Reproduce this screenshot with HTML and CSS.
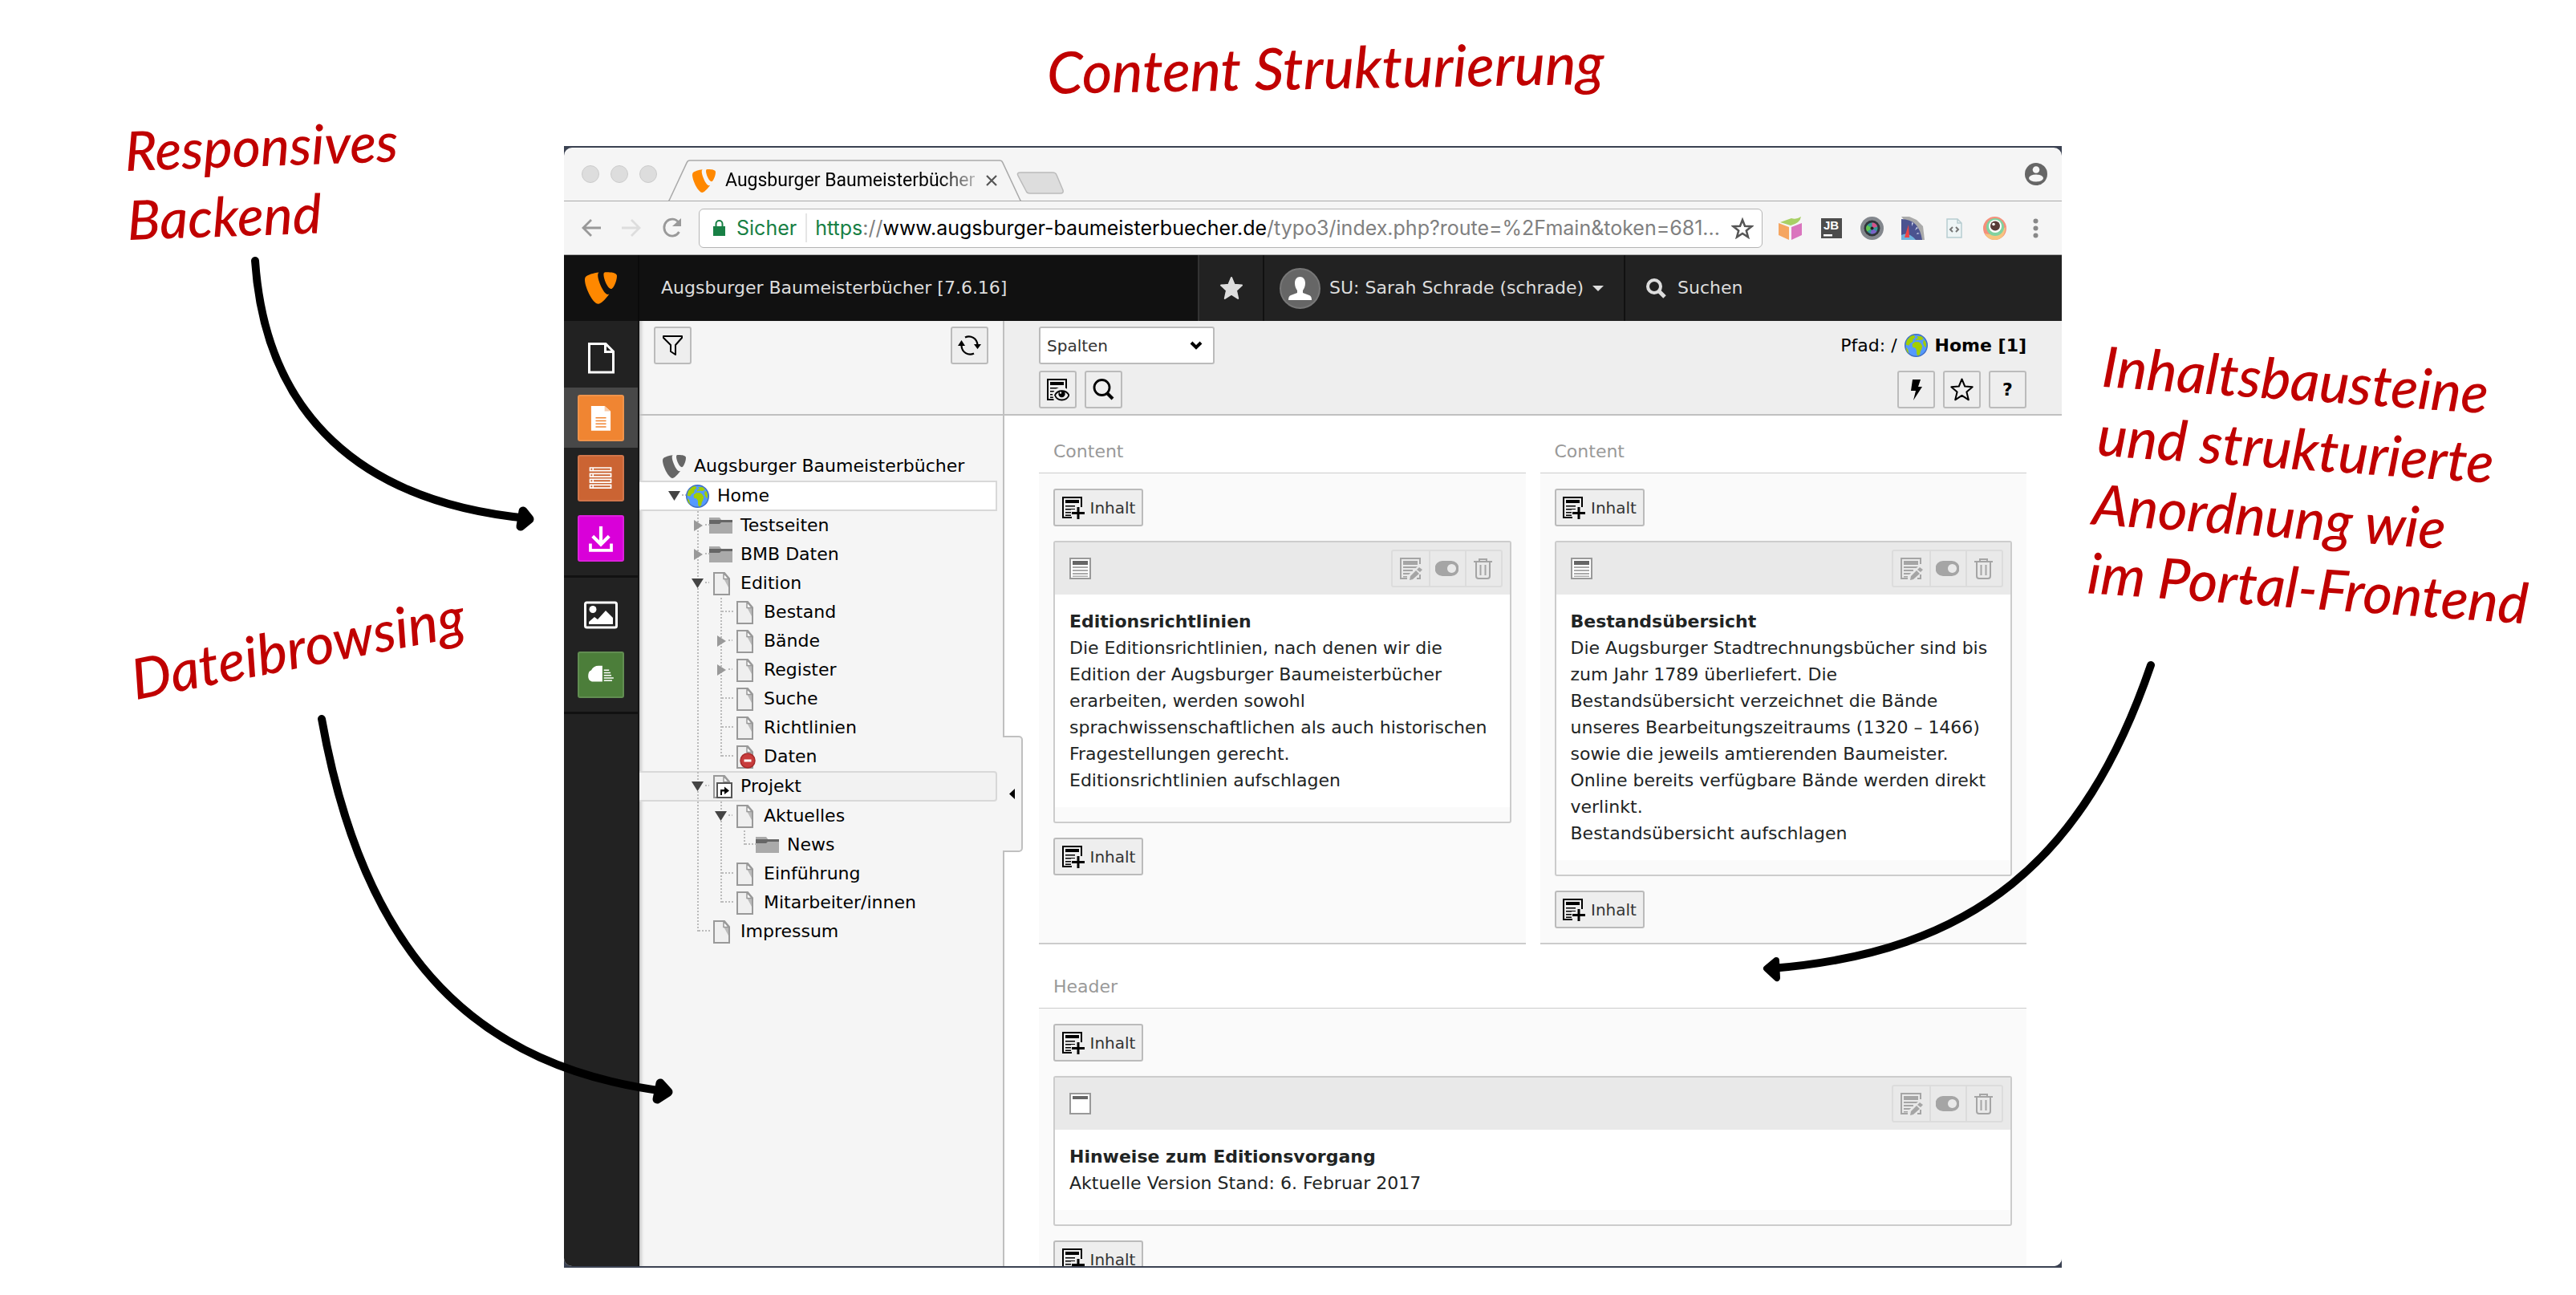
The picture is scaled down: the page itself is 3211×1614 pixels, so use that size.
FILE: index.html
```html
<!DOCTYPE html>
<html lang="de">
<head>
<meta charset="utf-8">
<meta name="viewport" content="width=device-width, initial-scale=1">
<title>Content Strukturierung</title>
<link rel="stylesheet" href="styles.css">
</head>
<body>
<svg class="sprite" aria-hidden="true">
  <symbol id="typo3" viewBox="1.9 2 12.1 12"><path fill="currentColor" d="M11.1 10.3c-.2 0-.3.1-.5.1C9 10.4 6.8 5 6.8 3.2c0-.7.2-.9.4-1.1-2 .2-4.3.9-5.1 1.8-.1.2-.2.6-.2 1C1.9 7.7 4.9 14 7 14c.9 0 2.6-1.6 4.1-3.7M10.2 2c1.9 0 3.8.3 3.8 1.4 0 2.2-1.4 4.9-2.1 4.9-1.3 0-2.9-3.6-2.9-5.4 0-.8.3-.9 1.2-.9"/></symbol>
  <symbol id="globe" viewBox="0 0 16 16"><circle cx="8" cy="8" r="7.6" fill="#59f" stroke="#3f6fc4" stroke-width=".8"/><path fill="#a2ce00" d="M4.2 1.6 1.6 4.4l-.7 3.1L3 8.2l.9-1.7 1.7-.8.3-2.1L7.5 2.4 6.3 1zM1 9.2l1.3 1.6.6 2.8C1.6 12.500 1 11 1 9.200M8.300 1.600l3.400.2 1.500 1.700-1.800.9-2.600-.2-1.300.6.300-1.200 1.600-.700zM5.300 7.100l2-1.600 2.500.1 1.300.9 1.200 2.100-.6 2.200-.8 1.400-.3 2-1.300 1-.9-1.200-.2-2.900-.9-1.400-1.800-.5zM13 4.500l1.200.2.700 2.500-.2 2.500-1.100-1.300-.9-2z"/></symbol>
  <symbol id="page" viewBox="0 0 29 29"><path fill="#efefef" stroke="#999" stroke-width="2" d="M6 1h13l6 7v20H6z"/><path fill="#bbb" d="M18 8h6v11z"/><path fill="#fff" stroke="#999" stroke-width="1.500" d="M18 1.500V8.500h6.500z"/></symbol>
  <symbol id="folder" viewBox="0 0 29 29"><path fill="#aaa" d="M0 4h13l3 4h13v16H0z"/><path fill="#666" d="M0 7h29v3H15l-2 2H0z"/></symbol>
  <symbol id="stop" viewBox="0 0 20 20"><circle cx="10" cy="10" r="9" fill="#c83c3c" stroke="#a52a2a" stroke-width="1.500"/><path fill="#fff" d="M5.500 8.500h9v3h-9z"/></symbol>
  <symbol id="shortcut" viewBox="0 0 20 20"><path fill="#fff" stroke="#555" stroke-width="2" d="M1 1h18v18H1z"/><path fill="#000" d="M5 16V9h5V5.500l6 5-6 4.500v-3.500H7V16z"/></symbol>
  <symbol id="filter" viewBox="0 0 29 29"><path fill="none" stroke="#000" stroke-width="2" stroke-linejoin="round" d="M3 3h23v2l-8 9v12l-6-4v-8L3 5z"/></symbol>
  <symbol id="refresh" viewBox="0 0 29 29"><g fill="none" stroke="#000" stroke-width="2.200"><path d="M9 4.500C16 1 24 6 24.500 14"/><path d="M20 24.500C13 28 5 23 4.500 15"/></g><path d="M20 13h9l-4.500 6zM0 15h9l-4.500-7z"/></symbol>
  <symbol id="doc" viewBox="0 0 29 29"><path fill="none" stroke="currentColor" stroke-width="2" d="M25 14V2H2v25h11"/><path fill="currentColor" d="M5 5h17v4H5zM5 12h17v1.500H5zM5 16h14v1.500H5zM5 20h9v1.500H5zM5 23.500h7V25H5z"/></symbol>
  <symbol id="doc-add" viewBox="0 0 29 29"><use href="#doc"/><path fill="#eee" d="M17 12h8v5h4v8h-4v4h-8v-4h-5v-8h5z"/><path fill="none" stroke="currentColor" stroke-width="2" d="M25 14V8"/><path fill="currentColor" d="M19.500 14h3v6H29v3h-6.500v6h-3v-6H13v-3h6.500z"/></symbol>
  <symbol id="doc-view" viewBox="0 0 29 29"><use href="#doc"/><path fill="#eee" d="M8 21c3-12 18-12 21-3v11H10z"/><path fill="none" stroke="#000" stroke-width="1.800" d="M11 21.500c3-7 14-7 17.500 0-3.500 8-14.500 8-17.500 0z"/><circle cx="19.500" cy="20" r="4.200"/><circle cx="18" cy="18.500" r="1.200" fill="#eee"/></symbol>
  <symbol id="doc-edit" viewBox="0 0 29 29"><path fill="none" stroke="currentColor" stroke-width="2" d="M26 9V2H2v25h8M26 22v5h-4"/><path fill="currentColor" d="M5 5h18v5H5zM5 12h18v2H5zM5 16h12v2H5zM5 20h9v2H5zM5 24h5v1.500H5z"/><path fill="#e9e9e9" d="M24 11l5 4v4L17 29h-7l1-6z"/><path fill="currentColor" d="M25 13l4 3-3 3-4-3zM21 17l4 4-8 7-4 1 1-5z"/></symbol>
  <symbol id="toggle" viewBox="0 0 29 29"><path fill="currentColor" fill-rule="evenodd" d="M9 5h11a9.500 9.500 0 0 1 0 19H9A9.500 9.500 0 0 1 9 5m11.500 4a5.500 5.500 0 1 0 .010 0z"/></symbol>
  <symbol id="trash" viewBox="0 0 29 29"><g fill="none" stroke="currentColor" stroke-width="2"><path d="M3 6h23M10 6V3h9v3M6 6v18q0 3 3 3h11q3 0 3-3V6"/><path d="M11.500 10v13M17.500 10v13"/></g></symbol>
  <symbol id="ce-text" viewBox="0 0 27 27"><path fill="#fff" stroke="#999" stroke-width="2" d="M1 1h25v25H1z"/><path fill="#666" d="M4 4h19v5H4z"/><path fill="#aaa" d="M4 11h19v2H4zM4 15h19v2H4zM4 19h19v2H4zM4 22.500h19v1.500H4z"/></symbol>
  <symbol id="ce-header" viewBox="0 0 27 27"><path fill="#fff" stroke="#999" stroke-width="2" d="M1 1h25v25H1z"/><path fill="#666" d="M4 4h19v4H4z"/></symbol>
</svg>

<div class="stage">
  <h1 class="headline note">Content Strukturierung</h1>

  <aside class="notes-left">
    <p class="note note-responsive">Responsives<br>Backend</p>
    <p class="note note-files">Dateibrowsing</p>
  </aside>

  <div class="browser">
   <div class="browser-inner">
    <div class="tabstrip">
      <div class="lights"><span></span><span></span><span></span></div>
      <div class="tab">
        <svg class="tab-shape" viewBox="0 0 440 53" preserveAspectRatio="none" aria-hidden="true"><path d="M0 52H1L23 4Q24 1 27 1H413Q416 1 417 4L439 52H440" fill="#f5f5f5" stroke="#aaa" stroke-width="1.500"/></svg>
        <svg class="favicon"><use href="#typo3"/></svg>
        <span class="tab-title">Augsburger Baumeisterbücher</span>
        <button class="bare tab-close" aria-label="Tab schließen"><svg viewBox="0 0 14 14"><path d="M1 1l12 12M13 1 1 13" stroke="#555" stroke-width="2.200"/></svg></button>
      </div>
      <button class="bare new-tab" aria-label="Neuer Tab"><svg viewBox="0 0 60 28"><path d="M5 1h40q4 0 5 3l8 19q1 4-3 4H17q-4 0-5-3L2 5q-2-4 3-4z" fill="#ddd" stroke="#bbb" stroke-width="1.500"/></svg></button>
      <button class="bare profile" aria-label="Profil"><svg viewBox="0 0 28 28"><circle cx="14" cy="14" r="14" fill="#666"/><circle cx="14" cy="8.500" r="4.300" fill="#f5f5f5"/><ellipse cx="14" cy="19" rx="9" ry="4.500" fill="#f5f5f5"/></svg></button>
    </div>

    <div class="navbar">
      <button class="bare nav-btn" aria-label="Zurück"><svg viewBox="0 0 26 26"><path d="M25 13H3M13 3 3 13l10 10" fill="none" stroke="#999" stroke-width="2.800"/></svg></button>
      <button class="bare nav-btn" aria-label="Vor"><svg viewBox="0 0 26 26"><path d="M1 13h22M13 3l10 10-10 10" fill="none" stroke="#ddd" stroke-width="2.800"/></svg></button>
      <button class="bare nav-btn" aria-label="Neu laden"><svg viewBox="0 0 26 26"><path d="M22 6.500A10 10.500 0 1 0 22.500 18" fill="none" stroke="#999" stroke-width="2.800"/><path d="M25 1v10H14z" fill="#999"/></svg></button>
      <div class="address">
        <svg class="lock" viewBox="0 0 15 20"><path fill="none" stroke="#188045" stroke-width="2" d="M3.500 8V5a4 4 0 0 1 8 0v3"/><path fill="#188045" d="M0 8h15v12H0z"/></svg>
        <span class="secure">Sicher</span>
        <span class="url"><span class="scheme">https</span>://<b>www.augsburger-baumeisterbuecher.de</b>/typo3/index.php?route=%2Fmain&amp;token=681...</span>
        <button class="bare bookmark" aria-label="Lesezeichen"><svg viewBox="0 0 28 27"><path d="M14 3l3 7.800 8.300.4-6.500 5.200 2.200 8.100-7-4.600-7 4.600 2.200-8.100L2.700 11.200l8.300-.4z" fill="none" stroke="#555" stroke-width="2.500"/></svg></button>
      </div>
      <div class="extensions">
        <svg viewBox="0 0 29 29"><path fill="#f5a662" d="M0 8l13 5v16L0 23z"/><path fill="#da75be" d="M29 8l-13 5v16l13-6z"/><path fill="#a8d065" d="M2 7l14-5q6 2 12-2-1 8-13 11z"/></svg>
        <svg viewBox="0 0 29 29"><path fill="#4c4c4c" d="M2 2h26v25H2z"/><text x="5" y="16" class="jb">JB</text><path fill="#fff" d="M5 22h11v2.500H5z"/></svg>
        <svg viewBox="0 0 29 29"><circle cx="14.500" cy="14.500" r="14.500" fill="#83878d"/><circle cx="14.500" cy="14.500" r="10" fill="#30343a"/><circle cx="14.500" cy="14.500" r="7" fill="#399"/><path fill="#d5528a" d="M14.500 14.500v-7a7 7 0 0 1 6.500 5z"/><path fill="#7a63c8" d="M14.500 14.500l6 4a7 7 0 0 1-8 2.500z"/><path fill="#60c44e" d="M14.500 14.500l-6 4a7 7 0 0 1 0-8z"/><circle cx="14.500" cy="14.500" r="2" fill="#222"/></svg>
        <svg viewBox="0 0 29 29"><path fill="#aaa" d="M0 0h10l9 4 8 8 2 17h-4z"/><path fill="#4b5390" d="M0 3q22 0 26 26H0z"/><path fill="#cdd3ea" d="M13 7l2 1-2 4zM19 13l2 1-4 3zM20 20l3 1-4 1z"/><path fill="#6fb2dd" d="M0 23q9-5 18 6H0z"/><path fill="#e44" d="M4 26 9 10l1 16z"/></svg>
        <svg viewBox="0 0 29 29"><path fill="#eef5f6" stroke="#b7cdd1" stroke-width="1.500" d="M6 3h13l5 5v18H6zM19 3v5h5"/><path fill="none" stroke="#777" stroke-width="2" d="M13 13l-3 3 3 3M17 13l3 3-3 3"/></svg>
        <svg viewBox="0 0 29 29"><circle cx="14.500" cy="14.500" r="14.500" fill="#f5907b"/><path fill="#f6c47f" d="M2 21q13 4 26-8-1 16-14 16-8 0-12-8"/><circle cx="15" cy="13" r="11" fill="#80d2a0"/><circle cx="15" cy="12" r="8" fill="#fff"/><circle cx="15" cy="11.500" r="6" fill="#583b38"/><circle cx="13" cy="9.500" r="1.800" fill="#fff"/></svg>
        <button class="bare" aria-label="Menü"><svg viewBox="0 0 29 29"><g fill="#888"><circle cx="14.500" cy="5.500" r="3"/><circle cx="14.500" cy="14.500" r="3"/><circle cx="14.500" cy="23.500" r="3"/></g></svg></button>
      </div>
    </div>

    <header class="topbar">
      <a class="brand" href="#" aria-label="TYPO3"><svg><use href="#typo3"/></svg></a>
      <span class="sitename">Augsburger Baumeisterbücher [7.6.16]</span>
      <button class="bare top-item fav" aria-label="Lesezeichen"><svg viewBox="0 0 30 30"><path fill="#ddd" stroke="#ddd" stroke-width="2" stroke-linejoin="round" d="M15 2l3.700 8.800 9.300.8-7 6.300 2.200 10L15 22.600 6.800 27.900l2.200-10-7-6.300 9.300-.8z"/></svg></button>
      <button class="bare top-item user">
        <svg class="avatar" viewBox="0 0 51 51"><circle cx="25.500" cy="25.500" r="24.500" fill="#666" stroke="#777" stroke-width="2"/><path fill="#fff" d="M25.500 11c4 0 6.500 3 6.500 8 0 4-1.500 7-3 9v3l8 3q3 1 3 6H11q0-5 3-6l8-3v-3c-1.500-2-3-5-3-9 0-5 2.500-8 6.500-8"/></svg>
        <span>SU: Sarah Schrade (schrade)</span>
        <svg class="caret" viewBox="0 0 14 7"><path fill="#ddd" d="M0 0h14L7 7z"/></svg>
      </button>
      <label class="top-item search">
        <svg viewBox="0 0 25 25"><circle cx="10" cy="10" r="8" fill="none" stroke="#ddd" stroke-width="4"/><path d="M16 16l7 7" stroke="#ddd" stroke-width="5"/></svg>
        <input type="search" placeholder="Suchen" aria-label="Suchen">
      </label>
    </header>

    <div class="workspace">
      <nav class="modules" aria-label="Module">
        <ul>
          <li><a href="#" aria-label="Web"><svg class="mod-plain" viewBox="0 0 44 44"><g fill="none" stroke="#fff" stroke-width="3"><path d="M7.500 4.500H28L37.500 14v26h-30z"/><path d="M27.500 5v9.500H37"/></g></svg></a></li>
          <li class="active"><a class="tile tile-page" href="#" aria-label="Seite"><svg viewBox="0 0 58 58"><path fill="#fff" d="M16 13h18l8 7v26H16z"/><path fill="#f9c9a4" d="M34 13v7h8z"/><path fill="#f08532" d="M22 28h14v1.500H22zM22 32h14v1.500H22zM22 36h14v1.500H22zM22 40h14v1.500H22z"/></svg></a></li>
          <li><a class="tile tile-list" href="#" aria-label="Liste"><svg viewBox="0 0 58 58"><g fill="none" stroke="#fff" stroke-width="1.800"><path d="M14.500 15h28v4h-28zM14.500 23h28v4h-28zM14.500 30.500h28v4h-28zM14.500 38h28v4h-28zM18.500 15v4M18.500 23v4M18.500 30.500v4M18.500 38v4"/></g></svg></a></li>
          <li><a class="tile tile-import" href="#" aria-label="Import"><svg viewBox="0 0 58 58"><path fill="none" stroke="#fff" stroke-width="4.500" d="M29 13v22M18 26l11 11 11-11"/><path fill="none" stroke="#fff" stroke-width="4" d="M15 36v9h28v-9"/></svg></a></li>
        </ul>
        <ul>
          <li><a href="#" aria-label="Datei"><svg class="mod-plain" viewBox="0 0 44 44"><rect x="2.500" y="7" width="39" height="31" rx="2" fill="none" stroke="#fff" stroke-width="3"/><circle cx="12" cy="15.500" r="4.500" fill="#fff"/><path fill="#fff" d="M7 34v-3l7-6 4 3 10-11 9 9v8z"/></svg></a></li>
          <li><a class="tile tile-files" href="#" aria-label="Dateiliste"><svg viewBox="0 0 58 58"><path fill="#fff" d="M31 17v21H17q-5-1-5-7 0-7 4-8 3-6 10-6zM33 22h7v1.500h-7zM33 25.500h9V27h-9zM33 29h10v1.500H33zM33 32.500h13V34H33zM33 36h11v1.500H33z"/></svg></a></li>
        </ul>
      </nav>

      <section class="pagetree" aria-label="Seitenbaum">
        <div class="docheader tree-tools">
          <button class="btn square" aria-label="Filter"><svg><use href="#filter"/></svg></button>
          <button class="btn square" aria-label="Aktualisieren"><svg><use href="#refresh"/></svg></button>
        </div>
        <ul class="tree">
          <li class="root"><svg><use href="#typo3"/></svg><a href="#">Augsburger Baumeisterbücher</a></li>
          <li class="current"><i class="g open first"></i><svg><use href="#globe"/></svg><a href="#">Home</a></li>
          <li><i class="g"></i><i class="g line closed"></i><svg><use href="#folder"/></svg><a href="#">Testseiten</a></li>
          <li><i class="g"></i><i class="g line closed"></i><svg><use href="#folder"/></svg><a href="#">BMB Daten</a></li>
          <li><i class="g"></i><i class="g line open"></i><svg><use href="#page"/></svg><a href="#">Edition</a></li>
          <li><i class="g"></i><i class="g line"></i><i class="g line stub"></i><svg><use href="#page"/></svg><a href="#">Bestand</a></li>
          <li><i class="g"></i><i class="g line"></i><i class="g line closed"></i><svg><use href="#page"/></svg><a href="#">Bände</a></li>
          <li><i class="g"></i><i class="g line"></i><i class="g line closed"></i><svg><use href="#page"/></svg><a href="#">Register</a></li>
          <li><i class="g"></i><i class="g line"></i><i class="g line stub"></i><svg><use href="#page"/></svg><a href="#">Suche</a></li>
          <li><i class="g"></i><i class="g line"></i><i class="g line stub"></i><svg><use href="#page"/></svg><a href="#">Richtlinien</a></li>
          <li><i class="g"></i><i class="g line"></i><i class="g half stub"></i><svg viewBox="0 0 29 29"><use href="#page"/><use href="#stop" x="9" y="9" width="20" height="20"/></svg><a href="#">Daten</a></li>
          <li class="marked"><i class="g"></i><i class="g line open"></i><svg viewBox="0 0 29 29"><use href="#page"/><use href="#shortcut" x="9" y="9" width="20" height="20"/></svg><a href="#">Projekt</a></li>
          <li><i class="g"></i><i class="g line"></i><i class="g line open"></i><svg><use href="#page"/></svg><a href="#">Aktuelles</a></li>
          <li><i class="g"></i><i class="g line"></i><i class="g line"></i><i class="g half stub"></i><svg><use href="#folder"/></svg><a href="#">News</a></li>
          <li><i class="g"></i><i class="g line"></i><i class="g line stub"></i><svg><use href="#page"/></svg><a href="#">Einführung</a></li>
          <li><i class="g"></i><i class="g line"></i><i class="g half stub"></i><svg><use href="#page"/></svg><a href="#">Mitarbeiter/innen</a></li>
          <li><i class="g"></i><i class="g half stub"></i><svg><use href="#page"/></svg><a href="#">Impressum</a></li>
        </ul>
        <button class="collapse" aria-label="Seitenbaum einklappen"><svg viewBox="0 0 7 13"><path d="M7 0v13L0 6.500z"/></svg></button>
      </section>

      <main class="content">
        <div class="docheader content-tools">
          <div class="tool-row">
            <span class="select"><select aria-label="Ansicht"><option>Spalten</option></select><svg viewBox="0 0 16 11"><path d="M2 2l6 6 6-6" fill="none" stroke="#000" stroke-width="4"/></svg></span>
            <div class="path">Pfad: / <svg><use href="#globe"/></svg> <strong>Home [1]</strong></div>
          </div>
          <div class="tool-row">
            <div class="tools"><button class="btn square" aria-label="Anzeigen"><svg><use href="#doc-view"/></svg></button><button class="btn square" aria-label="Suchen"><svg viewBox="0 0 29 29"><circle cx="12.500" cy="12" r="9.500" fill="none" stroke="#000" stroke-width="2.800"/><path d="M19 19l7 7" stroke="#000" stroke-width="4"/></svg></button></div>
            <div class="tools"><button class="btn square" aria-label="Cache leeren"><svg viewBox="0 0 29 29"><path d="M10 2h10l-3 9h5L11 28l3-12H8z"/></svg></button><button class="btn square" aria-label="Merken"><svg viewBox="0 0 29 29"><path d="M14.500 1.500l3.700 9 9.500.8-7.300 6.200 2.400 9.800-8.300-5.400-8.300 5.400 2.400-9.800-7.300-6.200 9.500-.8z" fill="none" stroke="#000" stroke-width="2" stroke-linejoin="round"/></svg></button><button class="btn square help" aria-label="Hilfe">?</button></div>
          </div>
        </div>

        <div class="columns">
          <section class="col">
            <h2>Content</h2>
            <div class="col-body">
              <button class="btn add"><svg><use href="#doc-add"/></svg>Inhalt</button>
              <article class="card">
                <div class="card-head"><svg class="type"><use href="#ce-text"/></svg><div class="group"><button aria-label="Bearbeiten"><svg><use href="#doc-edit"/></svg></button><button aria-label="Verbergen"><svg><use href="#toggle"/></svg></button><button aria-label="Löschen"><svg><use href="#trash"/></svg></button></div></div>
                <div class="card-body"><h3>Editionsrichtlinien</h3><p>Die Editionsrichtlinien, nach denen wir die Edition der Augsburger Baumeisterbücher erarbeiten, werden sowohl sprachwissenschaftlichen als auch historischen Fragestellungen gerecht.</p><a href="#">Editionsrichtlinien aufschlagen</a></div>
              </article>
              <button class="btn add"><svg><use href="#doc-add"/></svg>Inhalt</button>
            </div>
          </section>
          <section class="col">
            <h2>Content</h2>
            <div class="col-body">
              <button class="btn add"><svg><use href="#doc-add"/></svg>Inhalt</button>
              <article class="card">
                <div class="card-head"><svg class="type"><use href="#ce-text"/></svg><div class="group"><button aria-label="Bearbeiten"><svg><use href="#doc-edit"/></svg></button><button aria-label="Verbergen"><svg><use href="#toggle"/></svg></button><button aria-label="Löschen"><svg><use href="#trash"/></svg></button></div></div>
                <div class="card-body"><h3>Bestandsübersicht</h3><p>Die Augsburger Stadtrechnungsbücher sind bis zum Jahr 1789 überliefert. Die Bestandsübersicht verzeichnet die Bände unseres Bearbeitungszeitraums (1320 – 1466) sowie die jeweils amtierenden Baumeister. Online bereits verfügbare Bände werden direkt verlinkt.</p><a href="#">Bestandsübersicht aufschlagen</a></div>
              </article>
              <button class="btn add"><svg><use href="#doc-add"/></svg>Inhalt</button>
            </div>
          </section>
          <section class="col wide">
            <h2>Header</h2>
            <div class="col-body">
              <button class="btn add"><svg><use href="#doc-add"/></svg>Inhalt</button>
              <article class="card">
                <div class="card-head"><svg class="type"><use href="#ce-header"/></svg><div class="group"><button aria-label="Bearbeiten"><svg><use href="#doc-edit"/></svg></button><button aria-label="Verbergen"><svg><use href="#toggle"/></svg></button><button aria-label="Löschen"><svg><use href="#trash"/></svg></button></div></div>
                <div class="card-body"><h3>Hinweise zum Editionsvorgang</h3><p>Aktuelle Version Stand: 6. Februar 2017</p></div>
              </article>
              <button class="btn add"><svg><use href="#doc-add"/></svg>Inhalt</button>
            </div>
          </section>
        </div>
      </main>
    </div>
   </div>
  </div>

  <aside class="notes-right">
    <p class="note note-blocks">Inhaltsbausteine<br>und strukturierte<br>Anordnung wie<br>im Portal-Frontend</p>
  </aside>

  <svg class="arrows" viewBox="0 0 3211 1614" preserveAspectRatio="none" aria-hidden="true">
    <g fill="none" stroke="#000" stroke-width="10" stroke-linecap="round" stroke-linejoin="round">
      <path d="M318 325C331 517 450 626 658 646"/><path stroke-width="11" d="M652 637L660 647 649 656z"/>
      <path d="M401 896C455 1200 600 1330 828 1360"/><path stroke-width="11" d="M823 1350L833 1361 819 1370z"/>
      <path d="M2681 829C2598 1072 2460 1187 2208 1207"/><path stroke-width="8" d="M2214 1197L2202 1207 2215 1219z"/>
    </g>
  </svg>
</div>
</body>
</html>
```
FILE: styles.css
```css
* { box-sizing: border-box; }

body {
  margin: 0;
  background: #fff;
  color: #000;
  font: 22px/36px "DejaVu Sans", Verdana, sans-serif;
}

h1, h2, h3, p, ul { margin: 0; padding: 0; }
ul { list-style: none; }
a { color: inherit; text-decoration: none; }
svg { display: block; flex: none; }
button, input, select { font: inherit; color: inherit; }
.sprite { position: absolute; width: 0; height: 0; }

.bare {
  display: flex;
  align-items: center;
  padding: 0;
  border: 0;
  background: none;
}

/* Stage: annotations on both sides of the browser window */
.stage {
  position: relative;
  display: grid;
  grid-template-columns: 703fr 1867fr 641fr;
  grid-template-rows: 182px minmax(0, 1fr) 34px;
  height: 100vh;
  overflow: hidden;
}

.note {
  color: #c00000;
  font: italic 500 70px/86px Lato, sans-serif;
  white-space: nowrap;
}

.headline {
  grid-column: 2;
  padding: 40px 0 0 602px;
  font-size: 72px;
  transform: rotate(-1deg);
}

.notes-left {
  grid-column: 1;
  grid-row: 1 / 3;
  padding: 144px 0 0 154px;
}

.note-responsive { font-size: 68px; transform: rotate(-2deg); transform-origin: 0 0; }
.note-files { margin-top: 486px; margin-left: 18px; transform: rotate(-11deg); transform-origin: 0 100%; }

.notes-right {
  grid-column: 3;
  grid-row: 1 / 3;
  padding: 412px 0 0 54px;
}

.note-blocks { transform: rotate(4deg); transform-origin: 0 0; }

.arrows {
  position: absolute;
  inset: 0;
  width: 100%;
  height: 100%;
  pointer-events: none;
}

/* Browser window */
.browser {
  grid-column: 2;
  grid-row: 2;
  min-height: 0;
  padding: 2px 0;
  background: #3b4252;
}

.browser-inner {
  display: flex;
  flex-direction: column;
  height: 100%;
  overflow: hidden;
  border-radius: 10px;
  background: #f5f5f5;
}

.tabstrip {
  display: flex;
  flex: none;
  align-items: flex-end;
  height: 67px;
  padding: 0 18px 0 22px;
  border-bottom: 1px solid #aaa;
}

.lights { display: flex; gap: 14px; align-self: center; }
.lights span { width: 22px; height: 22px; border: 1px solid #ccc; border-radius: 50%; background: #ddd; }

.tab {
  position: relative;
  display: flex;
  align-items: center;
  width: 440px;
  height: 52px;
  margin: 0 0 -1px 14px;
  padding: 0 30px;
}

.tab-shape { position: absolute; inset: 0; width: 100%; height: 100%; }
.favicon { position: relative; width: 29px; height: 29px; color: #f80; }

.tab-title {
  position: relative;
  flex: 1;
  margin: 0 9px 0 12px;
  font: 23px/30px Roboto, sans-serif;
  white-space: nowrap;
  background: linear-gradient(90deg, #000 84%, #ccc);
  background-clip: text;
  color: transparent;
}

.tab-close { position: relative; }
.tab-close svg { width: 14px; height: 14px; }
.new-tab { margin: 0 auto 8px -6px; }
.new-tab svg { width: 60px; height: 28px; }
.profile { align-self: center; }
.profile svg { width: 28px; height: 28px; }

.navbar {
  display: flex;
  flex: none;
  align-items: center;
  gap: 24px;
  height: 67px;
  padding: 0 18px 0 21px;
  border-bottom: 1px solid #aaa;
}

.nav-btn svg { width: 26px; height: 26px; }

.address {
  display: flex;
  flex: 1;
  align-items: center;
  min-width: 0;
  height: 49px;
  margin-left: -3px;
  padding: 0 10px 0 17px;
  border: 1px solid #b5b5b5;
  border-radius: 6px;
  background: #fff;
  font: 25px/36px Inter, sans-serif;
  white-space: nowrap;
}

.lock { width: 15px; height: 20px; }
.secure { margin-left: 14px; padding-right: 11px; border-right: 2px solid #e5e5e5; color: #188045; }
.url { flex: 1; margin-left: 10px; overflow: hidden; color: #808080; }
.url b { color: #000; font-weight: 400; }
.scheme { color: #188045; }
.bookmark svg { width: 28px; height: 27px; }

.extensions { display: flex; align-items: center; gap: 22px; margin-left: -4px; }
.extensions svg { width: 29px; height: 29px; }
.jb { fill: #fff; font: bold 15px "Liberation Sans", sans-serif; }

/* Backend top bar */
.topbar {
  display: flex;
  flex: none;
  align-items: stretch;
  height: 82px;
  background: #222;
  color: #ddd;
}

.brand {
  display: grid;
  place-items: center;
  width: 94px;
  border-right: 2px solid #0b0b0b;
  background: #111;
  color: #f80;
}

.brand svg { width: 40px; height: 40px; }
.sitename { flex: none; width: 696px; padding-left: 27px; background: #111; line-height: 82px; white-space: nowrap; }
.top-item { border-left: 2px solid #111; }
.fav { width: 81px; justify-content: center; border-color: #333; }
.fav svg { width: 30px; height: 30px; }
.user { width: 450px; gap: 11px; padding-left: 19px; white-space: nowrap; }
.avatar { width: 51px; height: 51px; }
.caret { width: 14px; height: 7px; }
.search { display: flex; flex: 1; align-items: center; gap: 14px; min-width: 0; padding-left: 26px; }
.search svg { width: 25px; height: 25px; }
.search input { flex: 1; min-width: 0; padding: 0; border: 0; background: none; outline: 0; }
.search input::placeholder { color: #ddd; opacity: 1; }

.workspace {
  display: grid;
  grid-template-columns: 94px 455px minmax(0, 1fr);
  flex: 1;
  min-height: 0;
}

/* Module menu */
.modules { border-right: 2px solid #151515; background: #222; }
.modules ul { padding: 8px 0 9px; border-bottom: 3px solid #111; }
.modules li { display: grid; place-items: center; height: 75px; }
.modules .active { background: #484848; }
.mod-plain { width: 44px; height: 44px; }
.tile { display: block; border: 2px solid rgba(255, 255, 255, .12); border-radius: 3px; }
.tile svg { width: 54px; height: 54px; }
.tile-page { background: #f08532; }
.tile-list { background: #cb6433; }
.tile-import { background: #d900d9; }
.tile-files { background: #4c7e3a; }

/* Shared buttons */
.docheader { height: 118px; border-bottom: 2px solid #c0c0c0; background: #eee; }

.btn {
  display: flex;
  align-items: center;
  justify-content: center;
  height: 47px;
  padding: 0;
  border: 2px solid #bbb;
  border-radius: 3px;
  background: #eee;
}

.btn svg { width: 29px; height: 29px; }
.square { width: 47px; }
.add { gap: 7px; width: 112px; color: #333; font-size: 20px; }
.add svg { color: #000; }
.help { font-weight: 700; }

/* Page tree */
.pagetree {
  position: relative;
  border-right: 2px solid #c0c0c0;
  background: #f5f5f5;
  box-shadow: inset 5px 0 4px -3px #bbb;
}

.tree-tools { display: flex; justify-content: space-between; padding: 7px 18px; }
.pagetree .docheader { background: none; }
.tree { padding-top: 45px; }

.tree li {
  display: flex;
  align-items: center;
  height: 36px;
  margin-right: 7px;
  padding-left: 29px;
}

.tree svg { width: 29px; height: 29px; }
.tree a { margin-left: 10px; white-space: nowrap; }
.tree .root svg { color: #666; }

.tree .current, .tree .marked { height: 38px; border: 2px solid #d8d8d8; border-left: 0; }
.tree .current { background: #fff; }
.tree .marked { border-radius: 0 4px 4px 0; background: #f2f2f2; }

.g { position: relative; flex: none; width: 29px; height: 36px; }
.line { background: repeating-linear-gradient(#bbb 0 2px, transparent 2px 4px) 14px 0 / 2px 100% no-repeat; }
.half { background: repeating-linear-gradient(#bbb 0 2px, transparent 2px 4px) 14px 0 / 2px 18px no-repeat; }
.stub::before, .open::before, .closed::before {
  content: "";
  position: absolute;
  top: 16px;
  left: 16px;
  width: 15px;
  height: 2px;
  background: repeating-linear-gradient(90deg, #bbb 0 2px, transparent 2px 4px);
}
.open::before, .closed::before { left: 24px; width: 5px; }
.open::after, .closed::after { content: ""; position: absolute; background: #444; }
.open::after { top: 12px; left: 7px; width: 15px; height: 12px; clip-path: polygon(0 0, 100% 0, 50% 100%); }
.closed::after { top: 11px; left: 10px; width: 11px; height: 14px; background: #999; clip-path: polygon(0 0, 100% 50%, 0 100%); }

.collapse {
  position: absolute;
  top: 517px;
  left: 100%;
  display: grid;
  place-items: center;
  width: 25px;
  height: 145px;
  padding: 0;
  border: 2px solid #c0c0c0;
  border-left: 0;
  border-radius: 0 5px 5px 0;
  background: #f5f5f5;
}

.collapse svg { width: 7px; height: 13px; }

/* Page module */
.content { min-width: 0; overflow: hidden; background: #fff; }
.content-tools { display: flex; flex-direction: column; gap: 8px; padding: 7px 44px 0 43px; }
.tool-row { display: flex; align-items: center; justify-content: space-between; }
.tools { display: flex; gap: 10px; }
.path { display: flex; gap: 9px; align-items: center; white-space: nowrap; }
.path svg { width: 29px; height: 29px; }

.select { position: relative; width: 219px; }
.select select {
  width: 100%;
  height: 47px;
  padding: 0 8px;
  border: 2px solid #bbb;
  border-radius: 3px;
  appearance: none;
  background: #fff;
  color: #333;
  font-size: 20px;
}
.select svg { position: absolute; top: 18px; right: 15px; width: 16px; height: 11px; pointer-events: none; }

.columns {
  display: grid;
  grid-template-columns: repeat(2, minmax(0, 1fr));
  gap: 8px 18px;
  padding: 0 44px 0 43px;
}

.col { display: flex; flex-direction: column; }
.wide { grid-column: 1 / 3; }
.col h2 { padding: 29px 18px 11px; color: #999; font-size: 22px; font-weight: 400; line-height: 31px; }
.col-body { flex: 1; padding: 19px 18px 18px; border: solid #ccc; border-width: 1px 0 2px; background: #fafafa; }

.card { margin: 18px 0; padding-bottom: 18px; border: 2px solid #ccc; border-radius: 3px; }
.card-head { display: flex; align-items: center; justify-content: space-between; height: 65px; padding: 0 9px 0 18px; background: #e9e9e9; }
.type { width: 27px; height: 27px; }
.group { display: flex; border: 2px solid #dcdcdc; border-radius: 3px; }
.group button { width: 45px; height: 43px; padding: 0 8px; border: 0; background: none; color: #a5a5a5; }
.group button + button { border-left: 2px solid #dcdcdc; padding-left: 6px; }
.group svg { width: 29px; height: 29px; }
.card-body { padding: 17px 8px 17px 18px; background: #fff; color: #212424; line-height: 33px; }
.card-body h3 { font-size: 22px; line-height: 33px; }
```
